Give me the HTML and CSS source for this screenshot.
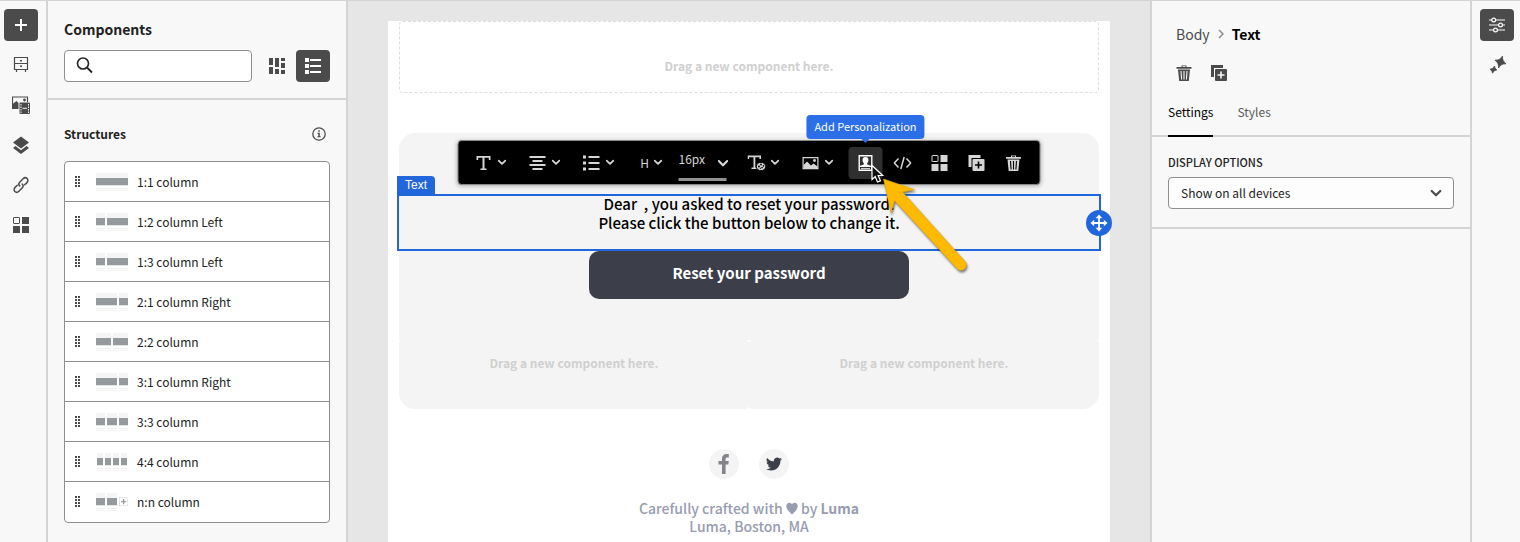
FILE: index.html
```html
<!DOCTYPE html>
<html lang="en">
<head>
<meta charset="utf-8">
<meta name="viewport" content="width=device-width, initial-scale=1">
<title>Email designer</title>
<link rel="stylesheet" href="styles.css">
</head>
<body>
<svg class="sprite" aria-hidden="true">
  <symbol id="chevron" viewBox="0 0 10 8"><path d="M1.2 1.8 5 5.6 8.800 1.800" fill="none" stroke="currentColor" stroke-width="2" stroke-linecap="round" stroke-linejoin="round"/></symbol>
  <symbol id="trash" viewBox="0 0 18 18"><path d="M6.500 1.500h5v1.500H16.500v1.800H1.500V3H6.500z" fill="currentColor"/><path d="M7.500 2.200h3V3h-3z" fill="var(--hole)"/><path d="M3 5.500h12L13.800 17H4.200z" fill="currentColor"/><path d="M6 7l.6 8.500M9 7v8.500M12 7l-.6 8.500" stroke="var(--hole)" stroke-width="1.100"/></symbol>
  <symbol id="duplicate" viewBox="0 0 18 18"><path d="M1 1h12v3H4v9H1z" fill="currentColor"/><rect x="5" y="5" width="12" height="12" rx="1" fill="currentColor"/><path d="M11 7.500v7M7.500 11h7" stroke="var(--hole)" stroke-width="1.600"/></symbol>
  <symbol id="tiles" viewBox="0 0 18 18"><rect x="1.500" y="1.500" width="6" height="6" rx=".5" fill="none" stroke="currentColor"/><path d="M10 1h7v7h-7zM1 10h7v7H1zM10 10h7v7h-7z" fill="currentColor"/></symbol>
  <symbol id="grip" viewBox="0 0 6 12"><path d="M0 0h2v2H0zM3 0h2v2H3zM0 3h2v2H0zM3 3h2v2H3zM0 6h2v2H0zM3 6h2v2H3zM0 9h2v2H0zM3 9h2v2H3z" fill="#4b4b4b"/></symbol>
  <symbol id="letter" viewBox="0 0 18 18"><path d="M2 2h14v4h-1.700V3.800H10v10.700h2V16H6v-1.500h2V3.800H3.700V6H2z" fill="currentColor"/></symbol>
</svg>

<div class="app">
  <nav class="rail" aria-label="Tools">
    <button class="tool tool--on" aria-label="Add components"><svg class="icon" viewBox="0 0 18 18"><path d="M9 3v12M3 9h12" stroke="#fff" stroke-width="2"/></svg></button>
    <button class="tool" aria-label="Content library"><svg class="icon" viewBox="0 0 18 18"><path d="M2.500 1.500h13v12h-13zM2.500 7.500h13M4.500 13.500V16M13.500 13.500V16" fill="none" stroke="#4b4b4b" stroke-width="1.200"/><path d="M8 4h2v1.500H8zM8 9.500h2V11H8z" fill="#4b4b4b"/></svg></button>
    <button class="tool" aria-label="Assets"><svg class="icon" viewBox="0 0 18 18"><path d="M.5 12V1h15V6" fill="none" stroke="#4b4b4b" stroke-width="1.200"/><circle cx="12.500" cy="4" r="1.400" fill="#4b4b4b"/><path d="M0 13V8.500L4.500 5 6.500 7v6z" fill="#4b4b4b"/><rect x="7.500" y="6.500" width="10.500" height="11.500" rx="1" fill="#4b4b4b"/><path d="M9 8v9M16.500 8v9" stroke="#f8f8f8" stroke-dasharray="1.500 1"/><path d="M10.500 12.300H15" stroke="#f8f8f8"/></svg></button>
    <button class="tool" aria-label="Layers"><svg class="icon" viewBox="0 0 18 18"><path d="M9 .5 17 6.500 9 12.500 1 6.500zM3.500 10 9 14.200 14.500 10 17 12 9 18 1 12z" fill="#4b4b4b"/></svg></button>
    <button class="tool" aria-label="Links"><svg class="icon" viewBox="0 0 18 18"><g fill="none" stroke="#4b4b4b" stroke-width="1.500" stroke-linecap="round"><path d="M7.700 9.900c-1.300-1.300-1-2.700 0-3.700l3.400-3.400c1.200-1.200 2.900-1.400 4-.3s1 2.900-.2 4.100l-2.200 2.200"/><path d="M10.300 8.100c1.300 1.300 1 2.700 0 3.700l-3.400 3.400c-1.200 1.200-2.900 1.400-4 .3s-1-2.900.2-4.100l2.200-2.200"/></g></svg></button>
    <button class="tool" aria-label="Fragments"><svg class="icon"><use href="#tiles"/></svg></button>
  </nav>

  <aside class="library">
    <header class="library__head">
      <h1 class="library__title">Components</h1>
      <div class="library__tools">
        <div class="search">
          <svg class="search__icon" viewBox="0 0 18 18"><circle cx="7" cy="6.500" r="5.500" fill="none" stroke="#222" stroke-width="1.600"/><path d="m11 10.500 5 5" stroke="#222" stroke-width="1.800"/></svg>
          <input class="search__input" type="text" aria-label="Search components">
        </div>
        <div class="views">
          <button class="tool" aria-label="Grid view"><svg class="icon" viewBox="0 0 18 18"><path d="M1 1h4v7H1zM7 1h4v9H7zM13 1h4v3h-4zM1 10h4v7H1zM7 12h4v5H7zM13 6h4v5h-4zM13 13h4v4h-4z" fill="#4b4b4b"/></svg></button>
          <button class="tool tool--on" aria-label="List view"><svg class="icon" viewBox="0 0 18 18"><path d="M1 1h4v4H1zM1 7h4v4H1zM1 13h4v4H1zM6 2h11v2H6zM6 8h11v2H6zM6 14h11v2H6z" fill="#fff"/></svg></button>
        </div>
      </div>
    </header>
    <section class="library__body">
      <div class="library__row">
        <h2 class="library__subtitle">Structures</h2>
        <button class="info" aria-label="About structures"><svg class="info__icon" viewBox="0 0 14 14"><circle cx="7" cy="7" r="6.200" fill="none" stroke="#4b4b4b" stroke-width="1.300"/><path d="M6.300 3.300h1.500v1.400H6.300zM5.500 5.800h2.300v3.500h.9v1H5.400v-1h.9V6.800h-.8z" fill="#4b4b4b"/></svg></button>
      </div>
      <ul class="structures">
        <li class="structure"><svg class="grip"><use href="#grip"/></svg><span class="thumb thumb--1"><i></i></span>1:1 column</li>
        <li class="structure"><svg class="grip"><use href="#grip"/></svg><span class="thumb thumb--left"><i></i><i></i></span>1:2 column Left</li>
        <li class="structure"><svg class="grip"><use href="#grip"/></svg><span class="thumb thumb--left"><i></i><i></i></span>1:3 column Left</li>
        <li class="structure"><svg class="grip"><use href="#grip"/></svg><span class="thumb thumb--right"><i></i><i></i></span>2:1 column Right</li>
        <li class="structure"><svg class="grip"><use href="#grip"/></svg><span class="thumb thumb--2"><i></i><i></i></span>2:2 column</li>
        <li class="structure"><svg class="grip"><use href="#grip"/></svg><span class="thumb thumb--right"><i></i><i></i></span>3:1 column Right</li>
        <li class="structure"><svg class="grip"><use href="#grip"/></svg><span class="thumb thumb--3"><i></i><i></i><i></i></span>3:3 column</li>
        <li class="structure"><svg class="grip"><use href="#grip"/></svg><span class="thumb thumb--4"><i></i><i></i><i></i><i></i></span>4:4 column</li>
        <li class="structure"><svg class="grip"><use href="#grip"/></svg><span class="thumb thumb--3"><i></i><i></i><i class="add"><svg viewBox="0 0 9 9"><path d="M.5.5h8v8h-8z" fill="#fff" stroke="#c8c8c8" stroke-dasharray="1 1"/><path d="M4.500 2v5M2 4.500h5" stroke="#888"/></svg></i></span>n:n column</li>
      </ul>
    </section>
  </aside>

  <main class="canvas">
    <article class="email">
      <div class="drop drop--outlined">Drag a new component here.</div>
      <section class="card">
        <div class="selection">
          <span class="selection__tag">Text</span>
          <p class="message">Dear &nbsp;, you asked to reset your password.<br>Please click the button below to change it.</p>
          <button class="mover" aria-label="Move"><svg class="mover__icon" viewBox="0 0 26 26"><path d="M13 6v14M6 13h14" stroke="#fff" stroke-width="1.800"/><path d="m13 4.500 3.300 3.700H9.700zM13 21.500l3.300-3.700H9.700zM4.500 13l3.700-3.300v6.600zM21.500 13l-3.700-3.300v6.600z" fill="#fff"/></svg></button>
        </div>
        <a class="cta" href="#reset">Reset your password</a>

        <div class="toolbar" role="toolbar" aria-label="Text formatting">
          <button class="menu" aria-label="Font"><svg class="icon"><use href="#letter"/></svg><svg class="chev"><use href="#chevron"/></svg></button>
          <button class="menu" aria-label="Alignment"><svg class="icon" viewBox="0 0 18 18"><path d="M1 3h16M4 7h10M1 11h16M4 15h10" stroke="currentColor" stroke-width="2"/></svg><svg class="chev"><use href="#chevron"/></svg></button>
          <button class="menu" aria-label="List"><svg class="icon" viewBox="0 0 18 18"><path d="M6 3h11M6 9h11M6 15h11" stroke="currentColor" stroke-width="2"/><path d="M2 1.500v3M2 7.500v3M2 13.500v3" stroke="currentColor" stroke-width="3"/></svg><svg class="chev"><use href="#chevron"/></svg></button>
          <button class="menu menu--heading" aria-label="Heading">H<svg class="chev"><use href="#chevron"/></svg></button>
          <div class="size"><select class="size__select" aria-label="Font size"><option>16px</option></select><svg class="size__chev"><use href="#chevron"/></svg></div>
          <button class="menu" aria-label="Font color"><svg class="icon" viewBox="0 0 18 18"><path d="M0 1.500h13.500V5h-1.600V3.200H7.800v10.300h1.500V15H4v-1.500h2V3.200H1.600V5H0z" fill="currentColor"/><ellipse cx="13.500" cy="12.500" rx="4.700" ry="4.200" fill="currentColor" stroke="#000"/><circle cx="11.500" cy="12.500" r="1" fill="#000"/><circle cx="13.500" cy="10.500" r=".9" fill="#000"/><circle cx="16" cy="11.800" r=".9" fill="#000"/><path d="M12.500 15c.5-1.500 1.500-1.500 3-1.200" fill="none" stroke="#000"/></svg><svg class="chev"><use href="#chevron"/></svg></button>
          <button class="menu" aria-label="Image"><svg class="icon" viewBox="0 0 18 18"><path d="M1.600 3.600h14.800v11H1.600z" fill="none" stroke="currentColor" stroke-width="1.200"/><circle cx="13" cy="6.500" r="1.400" fill="currentColor"/><path d="M2 14v-3l3.500-3.500 4 4 2.500-2 4 3V14z" fill="currentColor"/></svg><svg class="chev"><use href="#chevron"/></svg></button>
          <div class="actions">
            <button class="action action--on" aria-label="Add Personalization" aria-describedby="tip"><svg class="icon" viewBox="0 0 18 18"><path d="M2.700 1.700h12.600v14.600H2.700z" fill="none" stroke="#fff" stroke-width="1.400"/><path d="M9 3c2 0 3 1.300 3 3 0 1.500-.6 2.500-1.300 3.200v1.300L15 12v1H3v-1l4.300-1.500V9.200C6.600 8.500 6 7.500 6 6c0-1.700 1-3 3-3z" fill="#fff"/><path d="M4.500 14.600h9" stroke="#ddd"/></svg></button>
            <button class="action" aria-label="Source code"><svg class="icon" viewBox="0 0 18 18"><path d="M5 4.500.8 9 5 13.500M13 4.500 17.200 9 13 13.500M10.700 3 7.300 15" fill="none" stroke="currentColor" stroke-width="1.500"/></svg></button>
            <button class="action" aria-label="Save as fragment"><svg class="icon"><use href="#tiles"/></svg></button>
            <button class="action" aria-label="Duplicate"><svg class="icon"><use href="#duplicate"/></svg></button>
            <button class="action" aria-label="Delete"><svg class="icon"><use href="#trash"/></svg></button>
            <span class="tip" id="tip" role="tooltip">Add Personalization</span>
            <svg class="pointer" viewBox="0 0 14 20"><path d="M1.500 1.500v14l3.200-3 2.300 5.500 3-1.200-2.300-5.300h4.500z" fill="#111" stroke="#fff" stroke-width="1.200"/></svg>
            <svg class="arrow" viewBox="0 0 92 100"><path d="M3 4 34 14.500 22 17 84.500 86.500a5.300 5.300 0 0 1-8 7L14 25.500 10.500 38z" fill="#ffba00" stroke="#e9a400" stroke-width=".6"/></svg>
          </div>
        </div>
      </section>
      <div class="columns">
        <div class="drop drop--left">Drag a new component here.</div>
        <div class="drop drop--right">Drag a new component here.</div>
      </div>
      <footer class="foot">
        <div class="social">
          <a class="social__link" href="#facebook" aria-label="Facebook"><svg class="social__icon" viewBox="0 0 30 30"><path d="M13 25v-9.500H9.500V12H13V9.500C13 6.500 15 5 17.500 5h2.300v3.500h-1.500c-1.300 0-1.700.6-1.700 1.600V12h3.200l-.5 3.500h-2.700V25z" fill="#84838c"/></svg></a>
          <a class="social__link" href="#twitter" aria-label="Twitter"><svg class="social__icon social__icon--bird" viewBox="0 0 24 24"><path d="M23.950 4.570a10 10 0 0 1-2.820.78 4.960 4.960 0 0 0 2.160-2.720c-.95.550-2 .950-3.130 1.180a4.920 4.920 0 0 0-8.380 4.480C7.690 8.100 4.070 6.130 1.640 3.160a4.920 4.920 0 0 0 1.520 6.570 4.900 4.900 0 0 1-2.230-.61v.06a4.920 4.920 0 0 0 3.950 4.830 5 5 0 0 1-2.210.080 4.940 4.940 0 0 0 4.600 3.420A9.870 9.870 0 0 1 0 19.540a14 14 0 0 0 7.550 2.210c9.050 0 14-7.500 14-13.980 0-.210 0-.420-.020-.630a9.940 9.940 0 0 0 2.460-2.550z" fill="#3c3f4a"/></svg></a>
        </div>
        <p class="credit">Carefully crafted with <svg class="heart" viewBox="0 0 12 13"><path d="M6 12.500C3 9.500.3 7.200.3 4 .3 2 1.600.7 3.300.7 4.600.7 5.500 1.400 6 2.500 6.500 1.400 7.400.7 8.700.7c1.700 0 3 1.300 3 3.300 0 3.200-2.700 5.500-5.700 8.500z" fill="#989cb0"/></svg> by <strong>Luma</strong><br>Luma, Boston, MA</p>
      </footer>
    </article>
  </main>

  <aside class="inspector">
    <nav class="crumbs" aria-label="Breadcrumb"><a class="crumbs__link" href="#body">Body</a><svg class="crumbs__sep" viewBox="0 0 6 10"><path d="m1 1 4 4-4 4" fill="none" stroke="#8a8a8a" stroke-width="1.500"/></svg><strong class="crumbs__now">Text</strong></nav>
    <div class="inspector__actions">
      <button class="tool" aria-label="Delete"><svg class="icon"><use href="#trash"/></svg></button>
      <button class="tool" aria-label="Duplicate"><svg class="icon"><use href="#duplicate"/></svg></button>
    </div>
    <div class="tabs" role="tablist">
      <button class="tab tab--on" role="tab" aria-selected="true">Settings</button>
      <button class="tab" role="tab" aria-selected="false">Styles</button>
    </div>
    <section class="options">
      <label class="options__label" for="display">DISPLAY OPTIONS</label>
      <div class="picker"><select class="picker__select" id="display"><option>Show on all devices</option></select><svg class="picker__chev"><use href="#chevron"/></svg></div>
    </section>
  </aside>

  <nav class="rail rail--end" aria-label="Panels">
    <button class="tool tool--on" aria-label="Properties"><svg class="icon" viewBox="0 0 18 18"><path d="M1 4h3M7.500 4H17M1 9h9.500M14.500 9H17M1 14h4.500M9.500 14H17" stroke="#fff" stroke-width="1.200"/><g fill="none" stroke="#fff" stroke-width="1.200"><circle cx="5.700" cy="4" r="1.900"/><circle cx="12.500" cy="9" r="1.900"/><circle cx="7.500" cy="14" r="1.900"/></g></svg></button>
    <button class="tool" aria-label="Assistant"><svg class="icon" viewBox="0 0 18 18"><path d="M14.500 0Q14 5 18 7.800 13 7.500 10.500 12 11 7 7 4.200 12 4.500 14.500 0zM6.500 10Q6.500 12.600 8.800 14 6 14 4.500 17.200 4.500 14.600 2 13.200 5 13.200 6.500 10z" fill="#4b4b4b" stroke="#4b4b4b" stroke-width=".8"/></svg></button>
  </nav>
</div>
</body>
</html>
```
FILE: styles.css
```css
:root {
  --hole: #f8f8f8;
  --line: #d4d4d4;
  --ink: #4b4b4b;
  --blue: #2266dc;
}

* { box-sizing: border-box; }

body {
  margin: 0;
  font-family: "Noto Sans CJK SC", "Noto Sans", sans-serif;
  font-size: 12px;
  line-height: 20px;
  color: #222;
}

button, input, select { font: inherit; color: inherit; margin: 0; padding: 0; }
button { border: 0; background: none; }
h1, h2, p, ul { margin: 0; padding: 0; }
a { text-decoration: none; }
svg { display: block; flex: none; }
.sprite { display: none; }

.app {
  display: grid;
  grid-template-columns: 48px 300px minmax(0, 1fr) 320px 50px;
  height: 100vh;
  overflow: hidden;
  border-top: 1px solid var(--line);
  background: #f8f8f8;
}

.rail {
  display: flex;
  flex-direction: column;
  gap: 8px;
  padding: 8px 4px;
  border-right: 2px solid var(--line);
}
.rail--end { padding: 8px; border-right: 0; border-left: 2px solid var(--line); }

.tool {
  display: grid;
  place-items: center;
  width: 34px;
  height: 32px;
  border-radius: 4px;
  color: var(--ink);
}
.tool--on { background: var(--ink); }
.icon { width: 18px; height: 18px; }

.library { border-right: 2px solid var(--line); }
.library__head { padding: 16px 16px 16px; border-bottom: 2px solid var(--line); }
.library__title { font-size: 14px; line-height: 24px; font-weight: 700; }
.library__tools { display: flex; gap: 8px; margin-top: 9px; }
.search { position: relative; flex: 1; }
.search__icon { position: absolute; left: 12px; top: 7px; width: 18px; height: 18px; }
.search__input {
  display: block;
  width: 100%;
  height: 32px;
  padding: 0 12px 0 40px;
  border: 1px solid #8f8f8f;
  border-radius: 4px;
  background: #fff;
}
.views { display: flex; gap: 2px; }
.library__body { padding: 24px 16px 16px; }
.library__row { display: flex; align-items: center; justify-content: space-between; }
.library__subtitle { font-size: 12px; line-height: 20px; font-weight: 700; }
.info { padding: 0 4px; }
.info__icon { width: 14px; height: 14px; }

.structures {
  margin-top: 17px;
  list-style: none;
  border: 1px solid #8f8f8f;
  border-radius: 4px;
  background: #fff;
}
.structure { display: flex; align-items: center; height: 40px; padding-left: 10px; }
.structure:not(:last-child) { border-bottom: 1px solid #8f8f8f; }
.grip { width: 6px; height: 12px; margin-right: 15px; }

.thumb { display: grid; gap: 2px; width: 32px; height: 18px; margin-right: 9px; }
.thumb--1 { grid-template-columns: 1fr; }
.thumb--2 { grid-template-columns: 1fr 1fr; }
.thumb--3 { grid-template-columns: repeat(3, 1fr); }
.thumb--4 { grid-template-columns: repeat(4, 1fr); padding: 0 1px; }
.thumb--left { grid-template-columns: 9px 1fr; }
.thumb--right { grid-template-columns: 1fr 9px; }
.thumb i {
  background: linear-gradient(#f5f5f5 5px, #959a9d 5px 12px, #e2e4e5 12px 13px, #fff 13px 15px, #ececec 15px 16px, #fff 16px 17px, #f1f1f1 17px);
}
.thumb .add { background: #fff; padding-top: 4px; }

.canvas {
  background: #e6e6e6;
  padding-top: 20px;
  font-family: "Trebuchet MS", "Noto Sans CJK SC", "Noto Sans", sans-serif;
}
.email { max-width: 722px; min-height: 100%; margin: 0 auto; padding: 0 11px; background: #fff; }
.drop { padding: 13px 0 36px; font-weight: 700; font-size: 12px; line-height: 20px; text-align: center; color: #d0d0d0; }
.drop--outlined { padding: 34px 0 16px; border: 1px dashed #dedede; border-radius: 4px; }

.card {
  position: relative;
  margin-top: 40px;
  padding: 61px 0 41px;
  border-radius: 16px 16px 0 0;
  background: #f4f4f4;
}
.selection { position: relative; margin: 0 -2px; border: 2px solid var(--blue); }
.selection__tag {
  position: absolute;
  left: -2px;
  bottom: calc(100% + 1px);
  padding: 0 8px;
  border-radius: 0 4px 0 0;
  background: var(--blue);
  color: #fff;
  font: 12px/19px "Liberation Sans", sans-serif;
}
.message { margin-top: -2px; padding: 0 0 17px; font-size: 15px; line-height: 19px; font-weight: 500; text-align: center; color: #000; }
.mover {
  position: absolute;
  right: -13px;
  top: 14px;
  width: 26px;
  height: 26px;
  border-radius: 50%;
  background: var(--blue);
}
.mover__icon { width: 26px; height: 26px; }
.cta {
  display: block;
  width: 320px;
  max-width: 100%;
  margin: 0 auto;
  padding: 10px 0 14px;
  border-radius: 10px;
  background: #3c3f4a;
  color: #fff;
  font-size: 15px;
  line-height: 24px;
  font-weight: 700;
  text-align: center;
}

.toolbar {
  --hole: #000;
  position: absolute;
  top: 7px;
  left: 50%;
  transform: translateX(-50%);
  display: flex;
  align-items: center;
  width: 583px;
  height: 45px;
  padding: 0 5px;
  border: 1px solid #8a8a8a;
  border-radius: 4px;
  background: #000;
  color: #d6d6d6;
  font-family: "Noto Sans CJK SC", "Noto Sans", sans-serif;
  box-shadow: 0 1px 4px rgba(0, 0, 0, .3);
}
.menu { display: flex; align-items: center; justify-content: center; gap: 5px; width: 54px; height: 32px; }
.menu--heading { width: 46px; padding-left: 6px; }
.chev { width: 9px; height: 7px; }
.size { position: relative; margin: 0 10px 0 7px; border-bottom: 3px solid #929292; }
.size__select {
  display: block;
  appearance: none;
  width: 48px;
  height: 33px;
  padding-bottom: 4px;
  border: 0;
  background: none;
}
.size__chev { position: absolute; right: -2px; top: 14px; width: 11px; height: 9px; }
.actions { position: relative; display: flex; gap: 3px; margin-left: 4px; }
.action { display: grid; place-items: center; width: 34px; height: 32px; border-radius: 4px; }
.action--on { background: #2f2f2f; }
.tip {
  position: absolute;
  left: 17px;
  bottom: 40px;
  transform: translateX(-50%);
  padding: 1px 8px 3px;
  border-radius: 4px;
  background: #2a6ee8;
  color: #fff;
  font-size: 11px;
  white-space: nowrap;
}
.tip::after {
  content: "";
  position: absolute;
  left: 50%;
  top: 100%;
  margin-left: -4px;
  border: 4px solid transparent;
  border-top-color: #2a6ee8;
  border-bottom: 0;
}
.pointer { position: absolute; left: 22px; top: 17px; width: 14px; height: 20px; }
.arrow {
  position: absolute;
  left: 32px;
  top: 28px;
  width: 92px;
  height: 100px;
  pointer-events: none;
  filter: drop-shadow(1px 2px 1px rgba(0, 0, 0, .5));
}

.columns { display: grid; grid-template-columns: 1fr 1fr; }
.columns .drop { background: #f4f4f4; }
.drop--left { border-radius: 4px 4px 4px 16px; }
.drop--right { border-radius: 4px 4px 16px 4px; }

.foot { padding: 40px 0 0; text-align: center; }
.social { display: flex; justify-content: center; gap: 20px; }
.social__link { display: grid; place-items: center; width: 30px; height: 30px; border-radius: 50%; background: #f4f4f4; }
.social__icon { width: 30px; height: 30px; }
.social__icon--bird { width: 16px; height: 16px; }
.credit { margin-top: 20px; font-size: 14px; line-height: 18px; font-weight: 500; color: #989cb0; }
.heart { display: inline-block; width: 12px; height: 13px; vertical-align: -1px; }

.inspector { border-left: 2px solid var(--line); }
.crumbs { display: flex; align-items: center; gap: 8px; padding: 22px 24px 0; font-size: 14px; line-height: 22px; }
.crumbs__link { color: var(--ink); }
.crumbs__sep { width: 6px; height: 10px; }
.crumbs__now { color: #000; }
.inspector__actions { display: flex; gap: 1px; padding: 12px 15px 0; }
.tabs { display: flex; gap: 24px; padding: 0 16px; margin-top: 12px; border-bottom: 2px solid var(--line); }
.tab { margin-bottom: -2px; padding: 0 0 12px; border-bottom: 2px solid transparent; color: #5a5a5a; line-height: 22px; }
.tab--on { border-bottom-color: #000; color: #000; }
.options { padding: 15px 16px 18px; border-bottom: 2px solid var(--line); }
.options__label { display: block; font-size: 11px; font-weight: 500; line-height: 20px; }
.picker { position: relative; margin-top: 5px; }
.picker__select {
  display: block;
  appearance: none;
  width: 100%;
  height: 32px;
  padding: 0 32px 0 12px;
  border: 1px solid #8f8f8f;
  border-radius: 4px;
  background: #fdfdfd;
}
.picker__chev { position: absolute; right: 12px; top: 12px; width: 12px; height: 9px; color: var(--ink); }
```
